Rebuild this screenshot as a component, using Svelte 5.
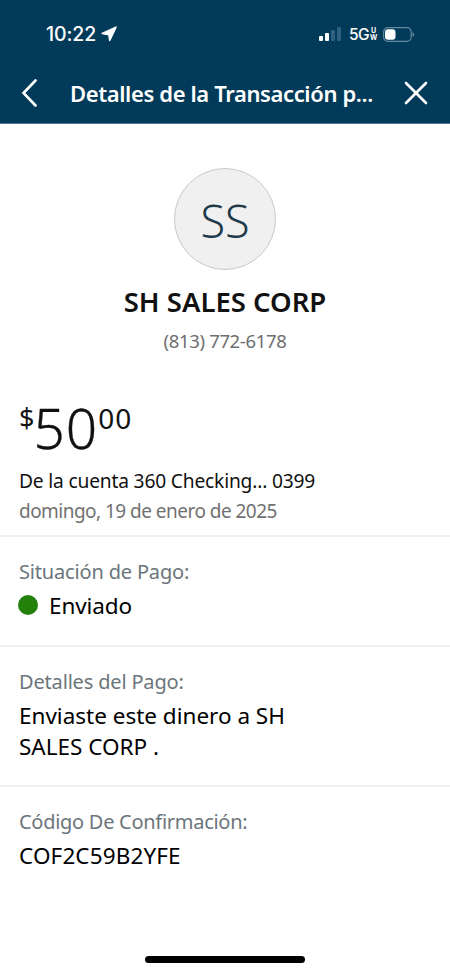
<script lang="ts">
  export let title: string = 'Detalles de la Transacción p...';
  export let recipient: string = 'SH SALES CORP';
  export let phone: string = '(813) 772-6178';
  export let dollars: string = '50';
  export let cents: string = '00';

  // the last two signal bars are dimmed
  const bars = [
    { x: 0, height: 5, active: true },
    { x: 6, height: 8, active: true },
    { x: 12, height: 11, active: false },
    { x: 18, height: 14, active: false }
  ];

  $: initials = recipient.split(' ').slice(0, 2).map(w => w[0]).join('');
</script>

<div class="screen">
  <header>
    <div class="status">
      <span class="time">10:22</span>
      <svg class="location" width="16" height="16" viewBox="0 0 16 16">
        <path d="M15 1.2 L8.7 14.5 L7.9 8.6 L1.2 7.5 Z" />
      </svg>
      <svg class="signal" width="23" height="14" viewBox="0 0 23 14">
        {#each bars as bar}
          <rect x={bar.x} y={14 - bar.height} width="4" height={bar.height} rx="1" class:dim={!bar.active} />
        {/each}
      </svg>
      <span class="network">5G</span>
      <span class="uw"><span>U</span><span>W</span></span>
      <svg class="battery" width="32" height="15" viewBox="0 0 32 15">
        <rect class="case" x="0.6" y="0.6" width="27.6" height="13.8" rx="4.4" />
        <rect x="2" y="2.2" width="10.5" height="10.6" rx="3" />
        <path class="tip" d="M29.5 5.2 Q31.2 5.8 31.2 7.5 Q31.2 9.2 29.5 9.8 Z" />
      </svg>
    </div>
    <div class="nav">
      <svg class="back" width="16" height="28" viewBox="0 0 16 28">
        <path d="M14.5 1.5 L2.5 14 L14.5 26.5" />
      </svg>
      <h1>{title}</h1>
      <svg class="close" width="24" height="24" viewBox="0 0 24 24">
        <path d="M2 2 L22 22 M22 2 L2 22" />
      </svg>
    </div>
  </header>

  <section class="recipient">
    <div class="avatar"><span>{initials}</span></div>
    <h2>{recipient}</h2>
    <p class="phone">{phone}</p>
  </section>

  <section class="payment">
    <div class="amount">
      <span class="currency">$</span>
      <span class="dollars">{dollars}</span>
      <span class="cents">{cents}</span>
    </div>
    <p class="account">De la cuenta 360 Checking... 0399</p>
    <p class="date">domingo, 19 de enero de 2025</p>
  </section>

  <section class="row status-row">
    <p class="label">Situación de Pago:</p>
    <p class="value sent"><span class="dot"></span><span>Enviado</span></p>
  </section>

  <section class="row details-row">
    <p class="label">Detalles del Pago:</p>
    <p class="value">Enviaste este dinero a SH<br />SALES CORP .</p>
  </section>

  <section class="row">
    <p class="label code-label">Código De Confirmación:</p>
    <p class="value code">COF2C59B2YFE</p>
  </section>

  <div class="home-bar"></div>
</div>

<style>
  .screen {
    box-sizing: border-box;
    width: 450px;
    height: 975px;
    display: flex;
    flex-direction: column;
    overflow: hidden;
    background-color: #fff;
    color: #111;
    font-family: 'Noto Sans', 'Open Sans', sans-serif;
    white-space: nowrap;
  }
  h1, h2, p {
    margin: 0;
    font-weight: 400;
  }
  svg {
    flex: none;
  }
  header {
    box-sizing: border-box;
    height: 124px;
    flex: none;
    border-bottom: 1px solid #54788f;
    background-color: #023b5a;
    color: #fff;
  }
  .status {
    height: 62px;
    padding: 6px 35px 0 46px;
    box-sizing: border-box;
    display: flex;
    align-items: center;
    font-family: Inter, sans-serif;
    fill: #fff;
  }
  .time {
    width: 51px;
    font-size: 19.5px;
    font-weight: 500;
    letter-spacing: -0.1px;
  }
  .location {
    margin-left: 4px;
  }
  .location path {
    stroke: #fff;
    stroke-width: 1.6;
    stroke-linejoin: round;
  }
  .signal {
    margin-left: auto;
  }
  .signal .dim {
    fill: #2f6080;
  }
  .network {
    margin: 1px 0 0 7px;
    font-size: 15.5px;
    font-weight: 500;
    letter-spacing: -0.6px;
  }
  .uw {
    width: 7px;
    margin: 0 6px 0 1px;
    display: flex;
    flex-direction: column;
    align-items: center;
    font-size: 7px;
    font-weight: 700;
    line-height: 7px;
  }
  .battery .case {
    fill: none;
    stroke: #66899d;
    stroke-width: 1.2;
  }
  .battery .tip {
    fill: #66899d;
  }
  .nav {
    height: 61px;
    padding: 0 22px 0 21px;
    display: flex;
    align-items: center;
  }
  .nav path {
    fill: none;
    stroke: #fff;
    stroke-width: 2.6;
    stroke-linecap: round;
  }
  h1 {
    margin-left: 33px;
    font-size: 22px;
    font-weight: 600;
    line-height: 30px;
    letter-spacing: -0.38px;
  }
  .close {
    margin-left: auto;
  }
  .recipient {
    padding-top: 44px;
    display: flex;
    flex-direction: column;
    align-items: center;
  }
  .avatar {
    box-sizing: border-box;
    width: 102px;
    height: 102px;
    display: flex;
    align-items: center;
    justify-content: center;
    border: 1.5px solid #c9c9c9;
    border-radius: 50%;
    background-color: #f0f0f0;
    color: #1f3a4b;
    font-size: 45px;
    font-weight: 300;
    line-height: 60px;
  }
  .avatar span {
    margin-top: 4px;
  }
  h2 {
    margin-top: 14px;
    font-size: 27.5px;
    font-weight: 600;
    line-height: 36px;
  }
  .phone {
    margin-top: 8px;
    color: #6e6e6e;
    font-size: 18.5px;
    line-height: 26px;
    letter-spacing: -0.35px;
  }
  .payment {
    height: 181px;
    box-sizing: border-box;
    padding: 44px 19px 0;
  }
  .amount {
    height: 64px;
    display: flex;
    align-items: flex-start;
  }
  .currency {
    margin-top: 5px;
    font-size: 27px;
    line-height: 30px;
  }
  .dollars {
    margin: 1px 0 0 -1px;
    font-size: 55px;
    font-weight: 300;
    line-height: 58px;
    letter-spacing: 1px;
    -webkit-text-stroke: 0.3px #111;
  }
  .cents {
    margin-top: 4px;
    font-size: 28px;
    line-height: 32px;
    letter-spacing: 1px;
  }
  .account {
    margin-top: 4px;
    font-size: 19.2px;
    line-height: 30px;
    letter-spacing: -0.18px;
  }
  .date {
    color: #717171;
    font-size: 19px;
    line-height: 30px;
    letter-spacing: -0.53px;
  }
  .row {
    padding: 20px 19px 0;
    border-top: 2px solid #f0f0f0;
  }
  .status-row {
    height: 88px;
  }
  .details-row {
    height: 118px;
  }
  .label {
    color: #6b757b;
    font-size: 20px;
    line-height: 30px;
    letter-spacing: -0.17px;
  }
  .code-label {
    letter-spacing: -0.28px;
  }
  .value {
    margin-top: 3px;
    color: #000;
    font-size: 22.5px;
    line-height: 31px;
  }
  .code {
    letter-spacing: 0.12px;
  }
  .sent {
    display: flex;
    align-items: center;
    letter-spacing: -0.1px;
  }
  .dot {
    width: 20px;
    height: 20px;
    margin: -2px 11px 0 -1px;
    border-radius: 50%;
    background-color: #24820c;
  }
  .home-bar {
    width: 160px;
    height: 7px;
    margin: auto auto 12px;
    border-radius: 4px;
    background-color: #000;
  }
</style>
